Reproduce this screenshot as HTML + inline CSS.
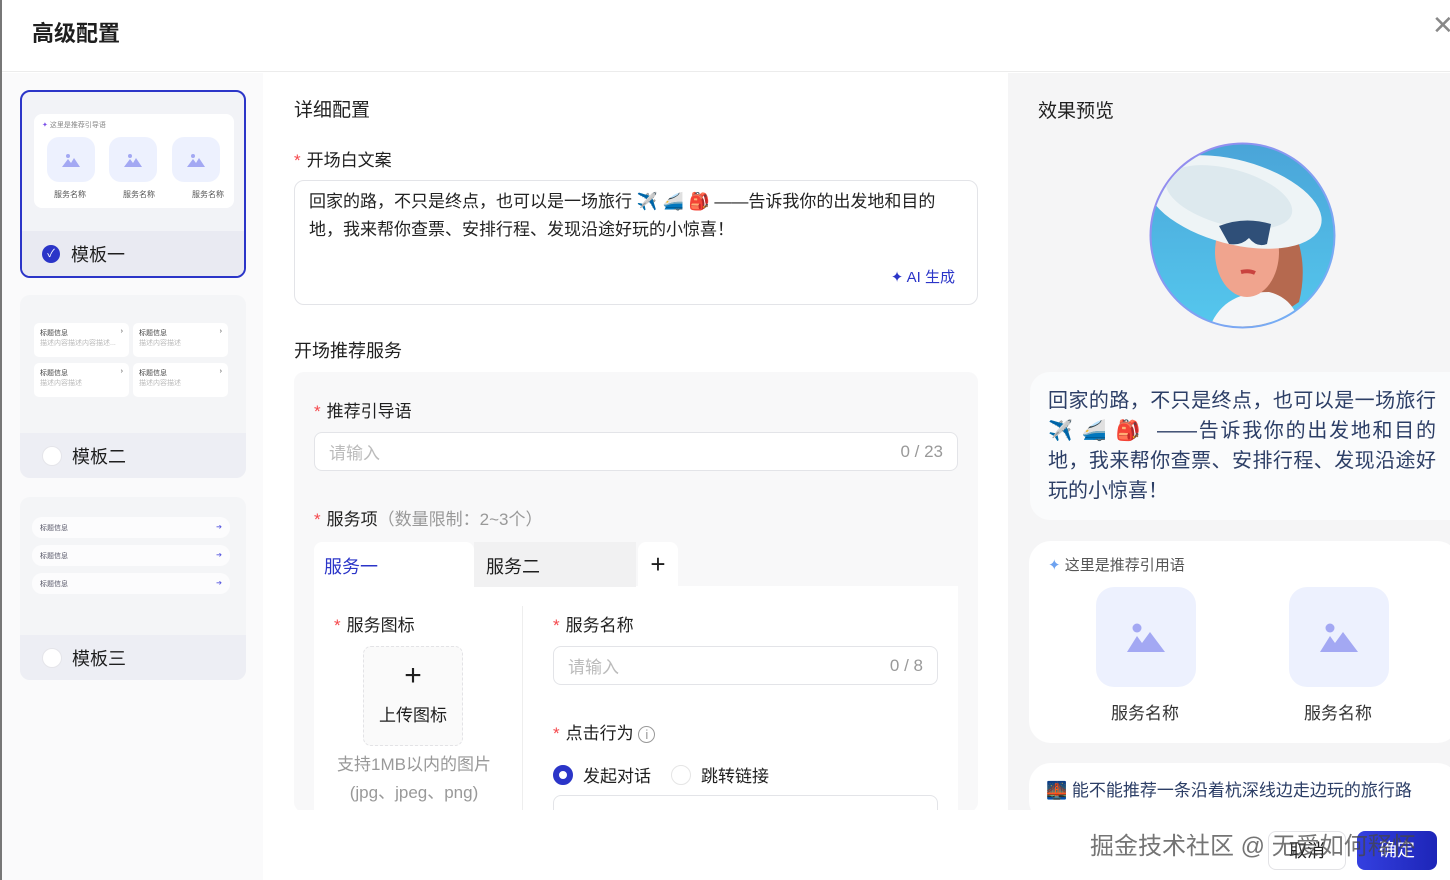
<!DOCTYPE html>
<html><head><meta charset="utf-8"><style>
*{box-sizing:border-box;margin:0;padding:0}
body{width:1450px;height:880px;overflow:hidden;font-family:"Liberation Sans","Noto Sans CJK SC",sans-serif;background:#fff;position:relative;color:#1f1f1f}
.a{position:absolute}
.req{color:#f5484c;margin-right:6px}
.card{position:absolute;left:20px;width:226px;border-radius:10px;background:#f4f5f7;overflow:hidden}
.foot{position:absolute;left:0;right:0;bottom:0;height:45px;background:#edeef4;font-size:18px;display:flex;align-items:center;padding-left:50px}
.radio{width:20px;height:20px;border-radius:50%;background:#fff;border:1px solid #e5e5ea;margin-right:10px}
.inp{position:absolute;border:1px solid #e3e4e8;border-radius:8px;background:#fff;color:#bbb;font-size:17px;padding:0 14px;display:flex;align-items:center;justify-content:space-between}
.ic{background:#edf1fe;border-radius:12px;display:flex;align-items:center;justify-content:center}
</style></head><body>
<div class="a" style="left:0;top:0;width:2px;height:880px;background:#777"></div>
<div class="a" style="left:2px;top:0;right:0;height:72px;border-bottom:1px solid #ececec"></div>
<div class="a" style="left:32px;top:16px;font-size:22px;font-weight:bold">高级配置</div>
<div class="a" style="left:1432px;top:10px;font-size:26px;color:#888">✕</div>
<!-- left column -->
<div class="a" style="left:2px;top:73px;width:261px;height:807px;background:#fafafb"></div>
<div class="card" style="top:90px;height:188px;border:2px solid #2b35c8;background:#f2f3f7">
 <div class="a" style="left:12px;top:22px;width:200px;height:94px;background:#fff;border-radius:8px">
  <div class="a" style="left:8px;top:6px;font-size:7px;color:#888"><span style="color:#7a4ee8">✦</span> 这里是推荐引导语</div>
  <div class="a ic" style="left:13px;top:23px;width:48px;height:45px"><svg width="18" height="14"><circle cx="6" cy="3" r="2" fill="#a3a8f3"/><path d="M0 14L6 6L9 10L12 5L18 14Z" fill="#a3a8f3"/></svg></div>
  <div class="a ic" style="left:75px;top:23px;width:48px;height:45px"><svg width="18" height="14"><circle cx="6" cy="3" r="2" fill="#a3a8f3"/><path d="M0 14L6 6L9 10L12 5L18 14Z" fill="#a3a8f3"/></svg></div>
  <div class="a ic" style="left:138px;top:23px;width:48px;height:45px"><svg width="18" height="14"><circle cx="6" cy="3" r="2" fill="#a3a8f3"/><path d="M0 14L6 6L9 10L12 5L18 14Z" fill="#a3a8f3"/></svg></div>
  <div class="a" style="left:20px;top:75px;font-size:8px;color:#555;width:170px;display:flex;justify-content:space-between"><span>服务名称</span><span>服务名称</span><span>服务名称</span></div>
 </div>
 <div class="foot" style="padding-left:20px;background:#e9eaf2"><div style="width:18px;height:18px;border-radius:50%;background:#2b35c8;color:#fff;font-size:11px;text-align:center;line-height:18px;margin-right:11px">✓</div>模板一</div>
</div>
<div class="card" style="top:295px;height:183px">
 <div class="a" style="left:14px;top:28px;width:95px;height:34px;background:#fff;border-radius:5px;font-size:7px;padding:5px 6px;color:#444">标题信息<span style="float:right">›</span><br><span style="color:#bbb">描述内容描述内容描述...</span></div>
 <div class="a" style="left:113px;top:28px;width:95px;height:34px;background:#fff;border-radius:5px;font-size:7px;padding:5px 6px;color:#444">标题信息<span style="float:right">›</span><br><span style="color:#bbb">描述内容描述</span></div>
 <div class="a" style="left:14px;top:68px;width:95px;height:34px;background:#fff;border-radius:5px;font-size:7px;padding:5px 6px;color:#444">标题信息<span style="float:right">›</span><br><span style="color:#bbb">描述内容描述</span></div>
 <div class="a" style="left:113px;top:68px;width:95px;height:34px;background:#fff;border-radius:5px;font-size:7px;padding:5px 6px;color:#444">标题信息<span style="float:right">›</span><br><span style="color:#bbb">描述内容描述</span></div>
 <div class="foot" style="padding-left:22px"><div class="radio"></div>模板二</div>
</div>
<div class="card" style="top:497px;height:183px">
 <div class="a" style="left:12px;top:20px;width:198px;height:21px;background:#fcfcfd;border-radius:10px;font-size:7px;padding:6px 8px;color:#556">标题信息<span style="float:right;color:#5a5ae0">➔</span></div>
 <div class="a" style="left:12px;top:48px;width:198px;height:21px;background:#fcfcfd;border-radius:10px;font-size:7px;padding:6px 8px;color:#556">标题信息<span style="float:right;color:#5a5ae0">➔</span></div>
 <div class="a" style="left:12px;top:76px;width:198px;height:21px;background:#fcfcfd;border-radius:10px;font-size:7px;padding:6px 8px;color:#556">标题信息<span style="float:right;color:#5a5ae0">➔</span></div>
 <div class="foot" style="padding-left:22px"><div class="radio"></div>模板三</div>
</div>
<!-- middle -->
<div class="a" style="left:294px;top:95px;font-size:19px;color:#222">详细配置</div>
<div class="a" style="left:294px;top:146px;font-size:17px"><span class="req">*</span>开场白文案</div>
<div class="a" style="left:294px;top:180px;width:684px;height:125px;border:1px solid #e3e4e8;border-radius:10px;padding:7px 14px;font-size:17px;line-height:28px;color:#222">回家的路，不只是终点，也可以是一场旅行 ✈️ 🚄 🎒 ——告诉我你的出发地和目的地，我来帮你查票、安排行程、发现沿途好玩的小惊喜！
 <div class="a" style="right:22px;bottom:12px;font-size:15px;color:#2b35c8">✦ AI 生成</div></div>
<div class="a" style="left:294px;top:337px;font-size:18px">开场推荐服务</div>
<div class="a" style="left:294px;top:372px;width:684px;height:440px;background:#f8f8f9;border-radius:10px"></div>
<div class="a" style="left:314px;top:397px;font-size:17px"><span class="req">*</span>推荐引导语</div>
<div class="inp" style="left:314px;top:432px;width:644px;height:39px"><span>请输入</span><span style="color:#999">0 / 23</span></div>
<div class="a" style="left:314px;top:505px;font-size:17px"><span class="req">*</span>服务项<span style="color:#999">（数量限制：2~3个）</span></div>
<div class="a" style="left:314px;top:586px;width:644px;height:226px;background:#fff"></div>
<div class="a" style="left:314px;top:542px;width:160px;height:45px;background:#fff;border-radius:8px 8px 0 0;font-size:18px;color:#2b35c8;padding:11px 10px">服务一</div>
<div class="a" style="left:474px;top:542px;width:162px;height:45px;background:#f1f1f2;font-size:18px;padding:11px 12px">服务二</div>
<div class="a" style="left:638px;top:542px;width:40px;height:45px;background:#fff;border-radius:8px 8px 0 0;font-size:26px;text-align:center;line-height:44px">+</div>
<div class="a" style="left:522px;top:606px;width:1px;height:210px;background:#eee"></div>
<div class="a" style="left:334px;top:611px;font-size:17px"><span class="req">*</span>服务图标</div>
<div class="a" style="left:363px;top:646px;width:100px;height:100px;border:1px dashed #e3e3e6;border-radius:8px;background:#fafafa;text-align:center"><div style="font-size:30px;line-height:30px;margin-top:14px">+</div><div style="font-size:17px;margin-top:10px">上传图标</div></div>
<div class="a" style="left:334px;top:751px;width:160px;text-align:center;font-size:17px;color:#999;line-height:28px">支持1MB以内的图片<br>(jpg、jpeg、png)</div>
<div class="a" style="left:553px;top:611px;font-size:17px"><span class="req">*</span>服务名称</div>
<div class="inp" style="left:553px;top:646px;width:385px;height:39px"><span>请输入</span><span style="color:#999">0 / 8</span></div>
<div class="a" style="left:553px;top:719px;font-size:17px"><span class="req">*</span>点击行为 <span style="color:#999;font-size:13px;border:1px solid #999;border-radius:50%;display:inline-block;width:17px;height:17px;text-align:center;line-height:15px">i</span></div>
<div class="a" style="left:553px;top:762px;font-size:17px;display:flex;align-items:center"><span style="width:20px;height:20px;border-radius:50%;border:6px solid #2b35c8;margin-right:10px"></span>发起对话<span style="width:20px;height:20px;border-radius:50%;border:1px solid #e5e5e5;margin:0 10px 0 20px"></span>跳转链接</div>
<div class="a" style="left:553px;top:795px;width:385px;height:30px;border:1px solid #e3e4e8;border-radius:8px"></div>
<!-- right -->
<div class="a" style="left:1008px;top:73px;width:442px;height:807px;background:#f5f5f6"></div>
<div class="a" style="left:1038px;top:96px;font-size:19px">效果预览</div>
<svg class="a" style="left:1149px;top:142px" width="187" height="187" viewBox="0 0 187 187">
 <defs><clipPath id="c"><circle cx="93.5" cy="93.5" r="91"/></clipPath>
 <linearGradient id="sk" x1="0" y1="0" x2="0" y2="1"><stop offset="0" stop-color="#4aa4d8"/><stop offset="1" stop-color="#55c8ee"/></linearGradient>
 <linearGradient id="rg" x1="0" y1="0" x2="1" y2="1"><stop offset="0" stop-color="#9a86ee"/><stop offset="1" stop-color="#6fb3f5"/></linearGradient></defs>
 <circle cx="93.5" cy="93.5" r="93" fill="url(#rg)"/>
 <g clip-path="url(#c)">
  <rect width="187" height="187" fill="url(#sk)"/>
  <path d="M120 60 C150 80 160 120 150 160 L110 187 L90 187 Z" fill="#b5694f"/>
  <path d="M60 187 C70 160 90 150 120 150 C140 155 150 170 150 187Z" fill="#f4f6f8"/>
  <ellipse cx="98" cy="110" rx="32" ry="45" fill="#f0a48e"/>
  <ellipse cx="85" cy="60" rx="90" ry="42" transform="rotate(15 85 60)" fill="#eef4f6"/>
  <ellipse cx="80" cy="55" rx="65" ry="28" transform="rotate(15 80 55)" fill="#dde9ee"/>
  <path d="M70 84 Q95 74 122 82 L118 102 Q108 106 100 96 Q92 104 80 102Z" fill="#2f4f78"/>
  <path d="M92 130 Q100 128 106 131" stroke="#c9433f" stroke-width="4" fill="none"/>
 </g>
</svg>
<div class="a" style="left:1030px;top:372px;width:430px;height:148px;background:#fafbfc;border-radius:20px 0 0 20px;padding:14px 14px 0 18px;font-size:20px;line-height:30px;color:#2c3e66;text-align:justify;text-align-last:left"><div style="width:388px">回家的路，不只是终点，也可以是一场旅行 ✈️ 🚄 🎒 &nbsp;——告诉我你的出发地和目的地，我来帮你查票、安排行程、发现沿途好玩的小惊喜！</div></div>
<div class="a" style="left:1029px;top:541px;width:430px;height:202px;background:#fff;border-radius:22px">
 <div class="a" style="left:19px;top:13px;font-size:15px;color:#555"><span style="color:#6da2f0">✦</span> 这里是推荐引用语</div>
 <div class="a ic" style="left:67px;top:46px;width:100px;height:100px;border-radius:18px"><svg width="38" height="30"><circle cx="10" cy="6" r="4.5" fill="#a3a8f3"/><path d="M0 30L10 14L15 21L23 10L38 30Z" fill="#a3a8f3"/></svg></div>
 <div class="a ic" style="left:260px;top:46px;width:100px;height:100px;border-radius:18px"><svg width="38" height="30"><circle cx="10" cy="6" r="4.5" fill="#a3a8f3"/><path d="M0 30L10 14L15 21L23 10L38 30Z" fill="#a3a8f3"/></svg></div>
 <div class="a" style="left:82px;top:158px;font-size:17px;color:#333">服务名称</div>
 <div class="a" style="left:275px;top:158px;font-size:17px;color:#333">服务名称</div>
</div>
<div class="a" style="left:1029px;top:763px;width:430px;height:60px;background:#fff;border-radius:22px;padding:13px 0 0 17px;font-size:17px;color:#2c3e66">🌉 能不能推荐一条沿着杭深线边走边玩的旅行路</div>
<!-- footer -->
<div class="a" style="left:265px;top:810px;width:1185px;height:70px;background:#fff"></div>
<div class="a" style="left:1268px;top:831px;width:78px;height:39px;border:1px solid #e3e3e6;border-radius:8px;font-size:18px;text-align:center;line-height:38px">取消</div>
<div class="a" style="left:1357px;top:831px;width:80px;height:39px;background:linear-gradient(90deg,#3440e0,#1d25b8);border-radius:8px;font-size:18px;color:#fff;text-align:center;line-height:38px">确定</div>
<div class="a" style="left:1090px;top:826px;font-size:24px;color:rgba(70,70,70,.75);white-space:nowrap">掘金技术社区 @ 无爱如何释怀</div>
</body></html>
